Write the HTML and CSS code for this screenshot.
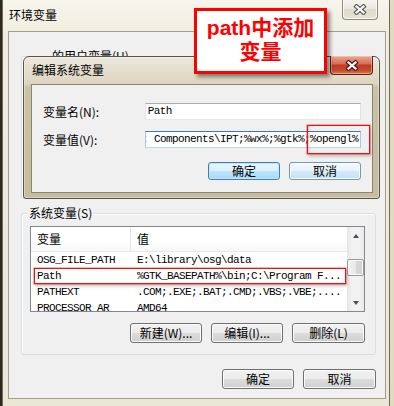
FILE: index.html
```html
<!DOCTYPE html>
<html lang="zh-CN">
<head>
	<meta charset="UTF-8">
	<title>环境变量</title>
	<link rel="stylesheet" href="styles.css">
</head>
<body>
<div class="desk">

	<div class="win env">
		<div class="titlebar">
			<span class="title">环境变量</span>
			<span class="close close-grey">
				<svg width="14" height="11" viewBox="0 0 14 11"><path d="M3.5 2.5 L10.5 8.5 M10.5 2.5 L3.5 8.5" stroke="#5a5a5a" stroke-width="4.4" stroke-linecap="square"/><path d="M3.5 2.5 L10.5 8.5 M10.5 2.5 L3.5 8.5" stroke="#fff" stroke-width="2.2" stroke-linecap="square"/></svg>
			</span>
		</div>
		<div class="client">
			<div class="group group-user">
				<span class="legend">的用户变量(U)</span>
			</div>
			<div class="group group-sys">
				<span class="legend">系统变量(S)</span>
				<div class="list">
					<div class="list-body">
						<div class="list-head"><span class="col1">变量</span><span class="col2">值</span></div>
						<div class="row"><span class="col1 mono">OSG_FILE_PATH</span><span class="col2 mono">E:\library\osg\data</span></div>
						<div class="row"><span class="col1 mono">Path</span><span class="col2 mono">%GTK_BASEPATH%\bin;C:\Program F...</span></div>
						<div class="row"><span class="col1 mono">PATHEXT</span><span class="col2 mono">.COM;.EXE;.BAT;.CMD;.VBS;.VBE;....</span></div>
						<div class="row"><span class="col1 mono">PROCESSOR_AR</span><span class="col2 mono">AMD64</span></div>
					</div>
					<div class="scroll">
						<span class="arrow arrow-up"></span>
						<span class="track"><span class="thumb"></span></span>
						<span class="arrow arrow-down"></span>
					</div>
				</div>
				<div class="buttons">
					<button class="btn">新建(W)...</button>
					<button class="btn">编辑(I)...</button>
					<button class="btn">删除(L)</button>
				</div>
			</div>
			<div class="buttons buttons-main">
				<button class="btn">确定</button>
				<button class="btn">取消</button>
			</div>
		</div>
	</div>

	<div class="win edit">
		<div class="titlebar">
			<span class="title">编辑系统变量</span>
			<span class="close close-red">
				<svg width="14" height="11" viewBox="0 0 14 11"><path d="M3.5 2.5 L10.5 8.5 M10.5 2.5 L3.5 8.5" stroke="#4a1a12" stroke-width="4.4" stroke-linecap="square"/><path d="M3.5 2.5 L10.5 8.5 M10.5 2.5 L3.5 8.5" stroke="#fff" stroke-width="2.2" stroke-linecap="square"/></svg>
			</span>
		</div>
		<div class="client">
			<div class="field-row">
				<label>变量名(N):</label>
				<div class="field mono"><span>Path</span></div>
			</div>
			<div class="field-row">
				<label>变量值(V):</label>
				<div class="field field-focus mono"><span>: Components\IPT;%wx%;%gtk%;%opengl%</span></div>
			</div>
			<div class="buttons">
				<button class="btn btn-default">确定</button>
				<button class="btn btn-hot">取消</button>
			</div>
		</div>
	</div>

	<div class="note">path中添加<br>变量</div>
	<div class="mark mark-value"></div>
	<div class="mark mark-row"></div>

</div>
</body>
</html>
```

FILE: styles.css
```css
* {
	box-sizing: border-box;
}
body {
	margin: 0;
	font: 12px "Noto Sans CJK SC", sans-serif;
	color: #000;
	background: linear-gradient(to right, #2f291d 0, #2f291d 2px, #e2d9bf 2px);
}
.desk {
	position: relative;
	width: 394px;
	height: 406px;
	overflow: hidden;
}
.win {
	position: absolute;
}
.mono {
	font-family: "Liberation Mono", monospace;
	font-size: 11px;
	letter-spacing: -0.6px;
}

/* outer window */
.env {
	left: 2px;
	top: -6px;
	width: 388px;
	height: 420px;
	padding: 0 3px 0 5px;
	border: 1px solid #6f6b5c;
	border-radius: 7px;
	background: linear-gradient(#f8f6ee, #f0ede0 40px, #ebe7d6);
}
.env .titlebar {
	position: relative;
	height: 36px;
	padding: 13px 0 0 1px;
	line-height: 14px;
}
.env .client {
	height: 368px;
	padding: 0 9px 0 12px;
	border: 1px solid #a39f8c;
	background: #f0f0f0;
}
.close {
	position: absolute;
	display: flex;
	align-items: center;
	justify-content: center;
}
.close-grey {
	top: 4px;
	right: 8px;
	width: 36px;
	height: 21px;
	border: 1px solid #8e8b7e;
	border-top: none;
	border-radius: 0 0 4px 4px;
	background: linear-gradient(#f6f5f0, #e9e7dd 50%, #dedbcd 51%, #e6e3d6);
	box-shadow: inset 0 0 0 1px rgba(255,255,255,.7);
}
.group {
	border: 1px solid #d5dfe5;
	border-radius: 3px;
	box-shadow: inset 1px 1px 0 #fff;
}
.legend {
	display: block;
	width: fit-content;
	margin: -8px 0 0 5px;
	padding: 0 2px;
	line-height: 14px;
	background: #f0f0f0;
}
.group-user {
	margin-top: 24px;
	height: 143px;
}
.group-user .legend {
	margin-left: 28px;
}
.group-sys {
	margin-top: 14px;
	height: 142px;
}

/* list view */
.list {
	display: flex;
	height: 86px;
	margin: 6px 10px 0 8px;
	border: 1px solid #828790;
	background: #fff;
	overflow: hidden;
}
.list-body {
	flex: 1;
}
.list-head {
	display: flex;
	height: 25px;
	line-height: 24px;
	border-bottom: 1px solid #e6e8eb;
	background: linear-gradient(#fff, #fff 55%, #f6f7f8);
}
.col1 {
	width: 100px;
	padding-left: 6px;
	white-space: nowrap;
}
.list-head .col1 {
	border-right: 1px solid #e5e5e5;
}
.col2 {
	flex: 1;
	padding-left: 6px;
	white-space: nowrap;
	overflow: hidden;
}
.row {
	display: flex;
	height: 16px;
	line-height: 16px;
}
.scroll {
	display: flex;
	flex-direction: column;
	width: 17px;
	background: linear-gradient(to right, #e6e6e6, #f2f2f2 30%, #f2f2f2 70%, #e9e9e9);
}
.arrow {
	display: flex;
	height: 17px;
	align-items: center;
	justify-content: center;
}
.arrow::before {
	content: "";
	border-left: 3.5px solid transparent;
	border-right: 3.5px solid transparent;
}
.arrow-up::before {
	border-bottom: 4px solid #505050;
}
.arrow-down::before {
	border-top: 4px solid #505050;
}
.track {
	flex: 1;
}
.thumb {
	display: block;
	height: 17px;
	margin-top: 15px;
	border: 1px solid #999;
	border-radius: 2px;
	background: linear-gradient(to right, #f4f4f4, #e8e8e8 50%, #d8d8d8 51%, #d2d2d2);
	box-shadow: inset 0 0 0 1px #fbfbfb;
}

/* buttons */
.buttons {
	display: flex;
	justify-content: flex-end;
	gap: 9px;
}
.group-sys .buttons {
	margin-top: 11px;
	padding-right: 10px;
}
.buttons-main {
	margin-top: 14px;
}
.btn {
	width: 72px;
	height: 20px;
	padding: 0;
	font: 12px "Noto Sans CJK SC", sans-serif;
	line-height: 16px;
	color: #000;
	border: 1px solid #707070;
	border-radius: 3px;
	background: linear-gradient(#f2f2f2, #ebebeb 50%, #dddddd 51%, #cfcfcf);
	box-shadow: inset 0 0 0 1px #fbfbfb;
}
.buttons-main .btn:last-child,
.group-sys .btn:last-child {
	width: 73px;
}

/* edit dialog */
.edit {
	left: 23px;
	top: 56px;
	width: 357px;
	height: 143px;
	padding: 0 6px 5px 7px;
	border: 1px solid #5a5446;
	border-radius: 6px 6px 3px 3px;
	background: linear-gradient(#ebe8dc, #dcd5bf 27px, #cbc2a6 30px, #c6bca0);
	box-shadow: 0 0 0 1px rgba(255,255,255,.35) inset;
}
.edit .titlebar {
	position: relative;
	height: 27px;
	padding: 6px 0 0 1px;
	line-height: 14px;
}
.close-red {
	top: -1px;
	right: 0;
	width: 43px;
	height: 19px;
	border: 1px solid #5e1f14;
	border-top: none;
	border-radius: 0 0 4px 4px;
	background: linear-gradient(#e9a898, #d66a52 45%, #c2381f 50%, #c44b2c 80%, #d97a4e);
	box-shadow: inset 0 0 0 1px rgba(255,220,200,.45);
}
.edit .client {
	height: 109px;
	padding: 18px 11px 0 11px;
	border: 1px solid #8d8570;
	background: #f0f0f0;
}
.field-row {
	display: flex;
	align-items: center;
	height: 17px;
	margin-bottom: 11px;
}
.field-row label {
	width: 102px;
}
.field {
	display: flex;
	justify-content: flex-end;
	width: 217px;
	height: 17px;
	padding: 0 2px;
	line-height: 15px;
	white-space: nowrap;
	overflow: hidden;
	border: 1px solid #e2e3ea;
	border-top-color: #abadb3;
	border-bottom-color: #e3e9ef;
	background: #fff;
}
.field:not(.field-focus) {
	justify-content: flex-start;
}
.field-focus {
	border-color: #a4c9e3;
	border-top-color: #3d7bad;
	border-bottom-color: #b7d9ed;
}
.edit .buttons {
	margin-top: 14px;
}
.edit .btn {
	height: 18px;
	line-height: 14px;
}
.btn-default {
	border-color: #3c7fb1;
	background: linear-gradient(#eaf6fd, #d9f0fc 50%, #bee6fd 51%, #a7d9f5);
	box-shadow: inset 0 0 0 1px #c6e6f8;
}
.btn-hot {
	border-color: #6e98bd;
	background: linear-gradient(#f4f9fd, #e6f2fb 50%, #d3e9f8 51%, #c6e2f5);
}

/* annotations */
.note {
	position: absolute;
	left: 194px;
	top: 8px;
	width: 133px;
	height: 66px;
	padding-top: 5px;
	border: 3px solid #f00;
	background: #fff;
	box-shadow: 3px 3px 4px rgba(0,0,0,.45);
	color: #f00;
	font: bold 21px "Liberation Sans", "Noto Sans CJK SC", sans-serif;
	line-height: 24px;
	text-align: center;
}
.mark {
	position: absolute;
	border: 1px solid #f01010;
	box-shadow: 0 0 0 0.5px rgba(240,16,16,.6), 1px 2px 3px rgba(0,0,0,.25);
}
.mark-value {
	left: 307px;
	top: 125px;
	width: 63px;
	height: 29px;
	box-shadow: 0 0 0 0.5px rgba(240,16,16,.6), 1px 2px 3px rgba(0,0,0,.25), inset 3px 0 3px -2px rgba(0,0,0,.2);
}
.mark-row {
	left: 34px;
	top: 268px;
	width: 312px;
	height: 16px;
}
```
